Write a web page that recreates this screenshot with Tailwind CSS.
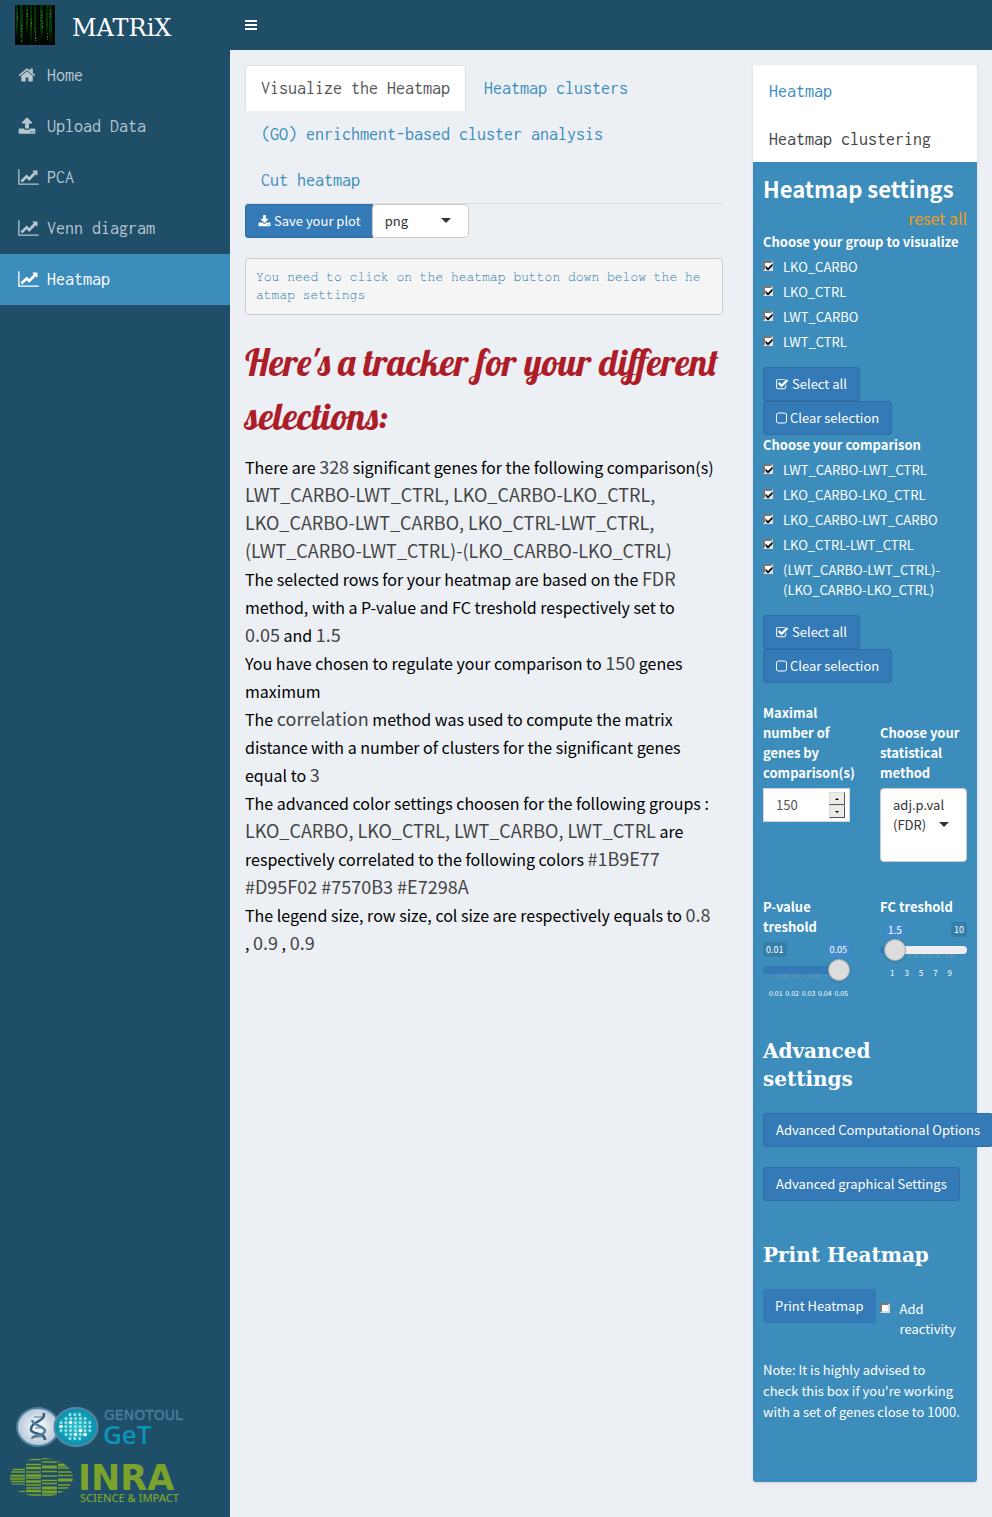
<!DOCTYPE html>
<html lang="en">
<head>
<meta charset="utf-8">
<title>MATRiX</title>
<script src="https://cdn.jsdelivr.net/npm/@tailwindcss/browser@4"></script>
</head>
<body class="flex min-h-screen bg-[#ecf0f5] font-['Source_Sans_Pro','Noto_Sans_CJK_SC',sans-serif] text-[13px] leading-5 text-[#333]">

<svg class="hidden" aria-hidden="true">
  <symbol id="i-home" viewBox="0 0 1792 1792"><path d="M1472 992v480q0 26-19 45t-45 19h-384v-384h-256v384h-384q-26 0-45-19t-19-45v-480q0-1 .5-3t.5-3l575-474 575 474q1 2 1 6zm223-69l-62 74q-8 9-21 11h-3q-13 0-21-7l-692-577-692 577q-12 8-24 7-13-2-21-11l-62-74q-8-10-7-23.5t11-21.5l719-599q32-26 76-26t76 26l244 204v-195q0-14 9-23t23-9h192q14 0 23 9t9 23v408l219 182q10 8 11 21.5t-7 23.5z"/></symbol>
  <symbol id="i-upload" viewBox="0 0 1792 1792"><path d="M1344 1472q0-26-19-45t-45-19-45 19-19 45 19 45 45 19 45-19 19-45zm256 0q0-26-19-45t-45-19-45 19-19 45 19 45 45 19 45-19 19-45zm128-224v320q0 40-28 68t-68 28h-1472q-40 0-68-28t-28-68v-320q0-40 28-68t68-28h427q21 56 70.5 92t110.5 36h256q61 0 110.5-36t70.5-92h427q40 0 68 28t28 68zm-325-648q-17 40-59 40h-256v448q0 26-19 45t-45 19h-256q-26 0-45-19t-19-45v-448h-256q-42 0-59-40-17-39 14-69l448-448q18-19 45-19t45 19l448 448q31 30 14 69z"/></symbol>
  <symbol id="i-download" viewBox="0 0 1792 1792"><path d="M1344 1344q0-26-19-45t-45-19-45 19-19 45 19 45 45 19 45-19 19-45zm256 0q0-26-19-45t-45-19-45 19-19 45 19 45 45 19 45-19 19-45zm128-224v320q0 40-28 68t-68 28h-1472q-40 0-68-28t-28-68v-320q0-40 28-68t68-28h465l135 136q58 56 136 56t136-56l136-136h464q40 0 68 28t28 68zm-325-569q17 41-14 70l-448 448q-18 19-45 19t-45-19l-448-448q-31-29-14-70 17-39 59-39h256v-448q0-26 19-45t45-19h256q26 0 45 19t19 45v448h256q42 0 59 39z"/></symbol>
  <symbol id="i-chart" viewBox="0 0 2048 1792"><path d="M2048 1536v128h-2048v-1536h128v1408h1920zm-128-1248v435q0 21-19.5 29.5t-35.5-7.5l-121-121-633 633q-10 10-23 10t-23-10l-233-233-416 416-192-192 585-585q10-10 23-10t23 10l233 233 464-464-121-121q-16-16-7.5-35.5t29.5-19.5h435q14 0 23 9t9 23z"/></symbol>
  <symbol id="i-check" viewBox="64 0 1792 1792"><path d="M1472 930v318q0 119-84.5 203.5t-203.5 84.5h-832q-119 0-203.5-84.5t-84.5-203.5v-832q0-119 84.5-203.5t203.5-84.5h832q63 0 117 25 15 7 18 23 3 17-9 29l-49 49q-10 10-23 10-3 0-9-2-23-6-45-6h-832q-66 0-113 47t-47 113v832q0 66 47 113t113 47h832q66 0 113-47t47-113v-254q0-13 9-22l64-64q10-10 23-10 6 0 12 3 20 8 20 29zm231-489l-814 814q-24 24-57 24t-57-24l-430-430q-24-24-24-57t24-57l110-110q24-24 57-24t57 24l263 263 647-647q24-24 57-24t57 24l110 110q24 24 24 57t-24 57z"/></symbol>
  <symbol id="i-square" viewBox="0 0 11 14"><rect x=".5" y="2" width="10" height="10" rx="2" fill="none" stroke="currentColor"/></symbol>
  <symbol id="i-tick" viewBox="0 0 10 10"><path d="M2.500 4.500L5 7L9.500 2.500V5L5 9.500L2.500 7Z"/></symbol>
</svg>

<aside class="flex w-[230px] shrink-0 flex-col bg-[#1f4e69]">
  <a href="#" class="flex h-[50px] items-center gap-[17px] pl-[15px] font-['DejaVu_Serif',serif] text-2xl font-light text-white">
    <svg class="size-10" viewBox="0 0 40 40" aria-hidden="true">
      <defs><linearGradient id="rain" x2="0" y2="1"><stop offset="0" stop-color="#062c06"/><stop offset=".6" stop-color="#083c08"/><stop offset="1" stop-color="#010601"/></linearGradient></defs>
      <rect width="40" height="40" fill="#020702"/>
      <g fill="url(#rain)"><rect x="1" width="2" height="34"/><rect x="5" width="3" height="38"/><rect x="11" width="2" height="30"/><rect x="15" width="2" height="40"/><rect x="19" width="2" height="35"/><rect x="25" width="3" height="36"/><rect x="31" width="2" height="32"/><rect x="34" width="3" height="39"/></g>
      <g stroke="#3c723c" stroke-dasharray="1 2 2 1"><path d="M2.500 8v8M6.500 20v18M12.500 5v7M16.500 14v8M20.500 23v13M26.500 6v10M27.500 18v6M32.500 28v9M35.500 5v9"/></g>
    </svg>
    <span class="pt-[6px]">MATRiX</span>
  </a>
  <nav class="flex flex-col font-['Inconsolata','Liberation_Mono',monospace] text-lg text-[#b8c7ce]">
    <a href="#" class="flex h-[51px] items-center gap-[9px] pb-[2px] pl-[18px]"><span class="w-5"><svg class="size-[18px] fill-current"><use href="#i-home"/></svg></span>Home</a>
    <a href="#" class="flex h-[51px] items-center gap-[9px] pb-[2px] pl-[18px]"><span class="w-5"><svg class="size-[18px] fill-current"><use href="#i-upload"/></svg></span>Upload Data</a>
    <a href="#" class="flex h-[51px] items-center gap-[9px] pb-[2px] pl-[18px]"><span class="w-5"><svg class="h-[18px] w-[21px] fill-current"><use href="#i-chart"/></svg></span>PCA</a>
    <a href="#" class="flex h-[51px] items-center gap-[9px] pb-[2px] pl-[18px]"><span class="w-5"><svg class="h-[18px] w-[21px] fill-current"><use href="#i-chart"/></svg></span>Venn diagram</a>
    <a href="#" aria-current="page" class="flex h-[51px] items-center gap-[9px] bg-[#3c8dbc] pb-[2px] pl-[18px] text-white"><span class="w-5"><svg class="h-[18px] w-[21px] fill-current"><use href="#i-chart"/></svg></span>Heatmap</a>
  </nav>
  <div class="mt-auto flex flex-col gap-[6px] pb-[13px] pl-[10px]">
    <svg class="h-[46px] w-[190px]" viewBox="0 0 190 46" role="img" aria-label="Genotoul GeT">
      <defs>
        <radialGradient id="pale"><stop offset="0" stop-color="#fff"/><stop offset="1" stop-color="#b5c6d8"/></radialGradient>
        <radialGradient id="teal"><stop offset="0" stop-color="#35c3cd"/><stop offset="1" stop-color="#078fae"/></radialGradient>
      </defs>
      <ellipse cx="28" cy="21" rx="21" ry="19" fill="url(#pale)" stroke="#4c7f9b" stroke-width="2"/>
      <g fill="none" stroke="#335f82" stroke-width="2.500"><path d="M34 7C35 17 21 14 21 24C22 29 35 26 35 34"/><path d="M22 14C23 20 35 20 35 25C34 31 22 28 22 33" stroke="#557d9c"/></g>
      <path d="M24 11h9M25 22h6M24 31h8" stroke="#527997" stroke-width="1"/>
      <ellipse cx="66" cy="21" rx="21.500" ry="19" fill="url(#teal)" stroke="#5687a1" stroke-width="2"/>
      <g fill="none" stroke="#9be5e9" stroke-width="3" stroke-linecap="round" stroke-dasharray="0 4.800"><path d="M60 8.500h13M56 12.500h22M51 16.500h31M51 20.500h31M51 24.500h31M56 28.500h22M60 32.500h13"/></g>
      <g fill="#fff"><circle cx="60.500" cy="16.500" r="1.800"/><circle cx="51" cy="20.500" r="1.800"/><circle cx="70.500" cy="24.500" r="1.800"/><circle cx="65.500" cy="28.500" r="1.800"/><circle cx="75" cy="28.500" r="1.800"/></g>
      <text x="94" y="14" fill="#4a7d98" stroke="#4a7d98" stroke-width=".4" font-family="DejaVu Sans" font-size="14">GENOTOUL</text>
      <text x="93" y="38" fill="#0895b8" font-family="Open Sans" font-weight="600" font-size="26">GeT</text>
    </svg>
    <svg class="h-[46px] w-[175px]" viewBox="0 0 175 46" role="img" aria-label="INRA Science &amp; Impact">
      <defs><clipPath id="globe"><ellipse cx="31.500" cy="19.500" rx="31.500" ry="19.500"/></clipPath></defs>
      <g clip-path="url(#globe)" stroke="#7ba32c">
        <path d="M0 11.500h15M0 14h15M0 17.500h15M0 21h15M0 23.500h15M0 33.500h15" stroke-width="1.500"/><path d="M0 19h15M0 26h15" stroke-width="1"/>
        <path d="M16 1.500h15M16 6.500h15M16 14h15M16 20h15M16 27h15M16 30h15M16 37h15" stroke-width="1.500"/><path d="M16 10h15M16 17.500h15M16 23.500h15M16 33h15" stroke-width="2.500"/>
        <path d="M32 .5h15M32 4h15M32 13.500h15M32 18h15M32 22.500h15M32 25.500h15M32 37h15" stroke-width="1.500"/><path d="M32 9h15M32 30h15M32 34h15" stroke-width="3"/>
        <path d="M48 3h15M48 10h15M48 14h15M48 17.500h15M48 27h15M48 30h15M48 34h15" stroke-width="1.500"/><path d="M48 7h15M48 22h15" stroke-width="3"/>
      </g>
      <g fill="#7ba32c"><text x="68" y="32" font-family="DejaVu Sans" font-weight="700" font-size="35">INRA</text>
      <text x="70" y="44" font-family="Noto Sans" font-weight="500" font-size="11">SCIENCE &amp; IMPACT</text></g>
    </svg>
  </div>
</aside>

<div class="flex min-w-0 flex-1 flex-col">
  <header class="flex h-[50px] items-center bg-[#1f4e69] pl-[15px]">
    <button aria-label="Toggle navigation" class="flex w-3 flex-col gap-[2px]"><span class="h-[2px] bg-white"></span><span class="h-[2px] bg-white"></span><span class="h-[2px] bg-white"></span></button>
  </header>

  <main class="flex items-start pt-[15px]">
    <section class="w-2/3 px-[15px]">
      <div role="tablist" class="flex flex-wrap gap-x-[2px] border-b border-[#ddd] font-['Inconsolata','Liberation_Mono',monospace] text-lg text-[#3c8dbc]">
        <a href="#" role="tab" aria-selected="true" class="flex h-[46px] items-center rounded-t border border-b-0 border-[#ddd] bg-white px-[15px] pb-px text-[#555]">Visualize the Heatmap</a>
        <a href="#" role="tab" class="flex h-[46px] items-center px-4">Heatmap clusters</a>
        <a href="#" role="tab" class="flex h-[46px] items-center px-4">(GO) enrichment-based cluster analysis</a>
        <a href="#" role="tab" class="flex h-[46px] items-center px-4">Cut heatmap</a>
      </div>
      <div class="flex">
        <button class="flex h-[34px] items-center gap-[3px] rounded-l-[3px] border border-[#2e6da4] bg-[#337ab7] pr-[11px] pl-3 text-white"><svg class="size-[13px] fill-current"><use href="#i-download"/></svg>Save your plot</button>
        <div class="relative -ml-px">
          <select aria-label="Plot format" class="h-[34px] w-[97px] appearance-none rounded border border-[#ccc] bg-white pl-3"><option>png</option></select>
          <span class="pointer-events-none absolute top-[14px] right-[18px] border-x-[5px] border-t-[5px] border-x-transparent border-t-[#333]"></span>
        </div>
      </div>
      <pre class="mt-5 overflow-hidden rounded border border-[#ccc] bg-[#f5f5f5] px-[10px] pt-[10px] pb-[9px] font-['Courier_10_Pitch','Nimbus_Mono_PS','FreeMono','Liberation_Mono',monospace] text-[13px] leading-[18px] text-[#2479ab]">You need to click on the heatmap button down below the he
atmap settings</pre>
      <h1 class="mt-5 mb-[10px] font-['Lobster','Liberation_Serif',serif] text-[37px] leading-[54px] font-normal whitespace-nowrap text-[#ad1d28]">Here's a tracker for your different<br>selections:</h1>
      <div class="text-base leading-7 whitespace-nowrap text-black [&_b]:text-[18px] [&_b]:leading-6 [&_b]:font-normal [&_b]:text-[#444]">
        <p>There are <b>328</b> significant genes for the following comparison(s)<br><b>LWT_CARBO-LWT_CTRL, LKO_CARBO-LKO_CTRL,<br>LKO_CARBO-LWT_CARBO, LKO_CTRL-LWT_CTRL,<br>(LWT_CARBO-LWT_CTRL)-(LKO_CARBO-LKO_CTRL)</b></p>
        <p>The selected rows for your heatmap are based on the <b>FDR</b><br>method, with a P-value and FC treshold respectively set to<br><b>0.05</b> and <b>1.5</b></p>
        <p>You have chosen to regulate your comparison to <b>150</b> genes<br>maximum</p>
        <p>The <b>correlation</b> method was used to compute the matrix<br>distance with a number of clusters for the significant genes<br>equal to <b>3</b></p>
        <p>The advanced color settings choosen for the following groups :<br><b>LKO_CARBO, LKO_CTRL, LWT_CARBO, LWT_CTRL</b> are<br>respectively correlated to the following colors <b>#1B9E77<br>#D95F02 #7570B3 #E7298A</b></p>
        <p>The legend size, row size, col size are respectively equals to <b>0.8</b><br>, <b>0.9</b> , <b>0.9</b></p>
      </div>
    </section>

    <aside class="w-1/3 px-[15px]">
      <div class="rounded-[3px] bg-white shadow-sm">
        <div role="tablist" class="flex flex-col pt-px font-['Inconsolata','Liberation_Mono',monospace] text-lg text-[#3c8dbc]">
          <a href="#" role="tab" class="flex h-12 items-center px-4 pt-[2px]">Heatmap</a>
          <a href="#" role="tab" aria-selected="true" class="flex h-12 items-center px-4 pt-[2px] text-[#444]">Heatmap clustering</a>
        </div>
        <form class="flex flex-col items-start rounded-b-[3px] bg-[#3c8dbc] px-[10px] pt-2 pb-[60px] text-white">
          <h2 class="text-[22px] leading-9 font-bold whitespace-nowrap">Heatmap settings</h2>
          <a href="#" class="mb-[2px] self-end text-base leading-6 text-[#f39c12]">reset all</a>
          <fieldset class="flex flex-col gap-[5px]">
            <legend class="mb-[5px] font-bold whitespace-nowrap">Choose your group to visualize</legend>
            <label class="flex gap-[10px]"><span class="relative mt-1 size-[10px] shrink-0"><input type="checkbox" checked class="block size-[10px] appearance-none border-2 border-t-[#777] border-r-[#ddd] border-b-[#ddd] border-l-[#777] bg-white"><svg class="pointer-events-none absolute inset-0 size-[10px] fill-black"><use href="#i-tick"/></svg></span>LKO_CARBO</label>
            <label class="flex gap-[10px]"><span class="relative mt-1 size-[10px] shrink-0"><input type="checkbox" checked class="block size-[10px] appearance-none border-2 border-t-[#777] border-r-[#ddd] border-b-[#ddd] border-l-[#777] bg-white"><svg class="pointer-events-none absolute inset-0 size-[10px] fill-black"><use href="#i-tick"/></svg></span>LKO_CTRL</label>
            <label class="flex gap-[10px]"><span class="relative mt-1 size-[10px] shrink-0"><input type="checkbox" checked class="block size-[10px] appearance-none border-2 border-t-[#777] border-r-[#ddd] border-b-[#ddd] border-l-[#777] bg-white"><svg class="pointer-events-none absolute inset-0 size-[10px] fill-black"><use href="#i-tick"/></svg></span>LWT_CARBO</label>
            <label class="flex gap-[10px]"><span class="relative mt-1 size-[10px] shrink-0"><input type="checkbox" checked class="block size-[10px] appearance-none border-2 border-t-[#777] border-r-[#ddd] border-b-[#ddd] border-l-[#777] bg-white"><svg class="pointer-events-none absolute inset-0 size-[10px] fill-black"><use href="#i-tick"/></svg></span>LWT_CTRL</label>
          </fieldset>
          <button type="button" class="mt-[15px] flex h-[34px] items-center gap-[3px] rounded-[3px] border border-[#2e6da4] bg-[#337ab7] px-3"><svg class="size-[13px] fill-current"><use href="#i-check"/></svg>Select all</button>
          <button type="button" class="flex h-[34px] items-center gap-[3px] rounded-[3px] border border-[#2e6da4] bg-[#337ab7] px-3"><svg class="h-[14px] w-[11px]"><use href="#i-square"/></svg>Clear selection</button>
          <fieldset class="flex flex-col gap-[5px]">
            <legend class="mb-[5px] font-bold whitespace-nowrap">Choose your comparison</legend>
            <label class="flex gap-[10px]"><span class="relative mt-1 size-[10px] shrink-0"><input type="checkbox" checked class="block size-[10px] appearance-none border-2 border-t-[#777] border-r-[#ddd] border-b-[#ddd] border-l-[#777] bg-white"><svg class="pointer-events-none absolute inset-0 size-[10px] fill-black"><use href="#i-tick"/></svg></span>LWT_CARBO-LWT_CTRL</label>
            <label class="flex gap-[10px]"><span class="relative mt-1 size-[10px] shrink-0"><input type="checkbox" checked class="block size-[10px] appearance-none border-2 border-t-[#777] border-r-[#ddd] border-b-[#ddd] border-l-[#777] bg-white"><svg class="pointer-events-none absolute inset-0 size-[10px] fill-black"><use href="#i-tick"/></svg></span>LKO_CARBO-LKO_CTRL</label>
            <label class="flex gap-[10px]"><span class="relative mt-1 size-[10px] shrink-0"><input type="checkbox" checked class="block size-[10px] appearance-none border-2 border-t-[#777] border-r-[#ddd] border-b-[#ddd] border-l-[#777] bg-white"><svg class="pointer-events-none absolute inset-0 size-[10px] fill-black"><use href="#i-tick"/></svg></span>LKO_CARBO-LWT_CARBO</label>
            <label class="flex gap-[10px]"><span class="relative mt-1 size-[10px] shrink-0"><input type="checkbox" checked class="block size-[10px] appearance-none border-2 border-t-[#777] border-r-[#ddd] border-b-[#ddd] border-l-[#777] bg-white"><svg class="pointer-events-none absolute inset-0 size-[10px] fill-black"><use href="#i-tick"/></svg></span>LKO_CTRL-LWT_CTRL</label>
            <label class="flex gap-[10px]"><span class="relative mt-1 size-[10px] shrink-0"><input type="checkbox" checked class="block size-[10px] appearance-none border-2 border-t-[#777] border-r-[#ddd] border-b-[#ddd] border-l-[#777] bg-white"><svg class="pointer-events-none absolute inset-0 size-[10px] fill-black"><use href="#i-tick"/></svg></span><span>(LWT_CARBO-LWT_CTRL)-<br>(LKO_CARBO-LKO_CTRL)</span></label>
          </fieldset>
          <button type="button" class="mt-[15px] flex h-[34px] items-center gap-[3px] rounded-[3px] border border-[#2e6da4] bg-[#337ab7] px-3"><svg class="size-[13px] fill-current"><use href="#i-check"/></svg>Select all</button>
          <button type="button" class="flex h-[34px] items-center gap-[3px] rounded-[3px] border border-[#2e6da4] bg-[#337ab7] px-3"><svg class="h-[14px] w-[11px]"><use href="#i-square"/></svg>Clear selection</button>

          <div class="mt-5 grid w-full grid-cols-2 gap-x-[30px]">
            <label for="maxgenes" class="self-end font-bold">Maximal number of genes by comparison(s)</label>
            <label for="method" class="self-end font-bold">Choose your statistical method</label>
            <div class="mt-[5px] flex h-[34px] items-center border border-[#d2d6de] bg-white pr-1 text-[#555]">
              <input id="maxgenes" type="number" value="150" class="w-full min-w-0 flex-1 [appearance:textfield] pl-3 outline-none [&::-webkit-inner-spin-button]:appearance-none">
              <span class="flex w-4 flex-col">
                <button type="button" aria-label="Increase" class="flex h-[13px] items-center justify-center border border-t-[#ddd] border-r-[#555] border-b-[#555] border-l-[#ddd] bg-[#eeebe7]"><span class="border-x-2 border-b-2 border-x-transparent border-b-black"></span></button>
                <button type="button" aria-label="Decrease" class="flex h-[13px] items-center justify-center border border-t-[#ddd] border-r-[#555] border-b-[#555] border-l-[#ddd] bg-[#eeebe7]"><span class="border-x-2 border-t-2 border-x-transparent border-t-black"></span></button>
              </span>
            </div>
            <div class="relative mt-[5px] h-[74px] rounded border border-[#ccc] bg-white px-3 py-[6px] text-[#333]">
              adj.p.val<br>(FDR)
              <span class="absolute top-[33px] right-[17px] border-x-[5px] border-t-[5px] border-x-transparent border-t-[#333]"></span>
              <select id="method" class="absolute inset-0 size-full opacity-0"><option>adj.p.val (FDR)</option></select>
            </div>
          </div>

          <div class="mt-[35px] grid w-full grid-cols-2 items-start gap-x-[30px]">
            <div>
              <label for="pval" class="block font-bold">P-value treshold</label>
              <div class="mt-[5px] flex h-[15px] items-center justify-between text-[9px] leading-[15px]"><span class="rounded-[3px] bg-black/10 px-[3px]">0.01</span><output for="pval" class="rounded-[3px] bg-[#428bca] px-[3px]">0.05</output></div>
              <div class="relative mt-[2px] h-[22px]">
                <input id="pval" type="range" min="0.01" max="0.05" step="0.01" value="0.05" class="block h-[22px] w-full appearance-none bg-transparent [&::-webkit-slider-runnable-track]:h-2 [&::-webkit-slider-runnable-track]:rounded-full [&::-webkit-slider-runnable-track]:bg-[#337ab7] [&::-webkit-slider-thumb]:-mt-[7px] [&::-webkit-slider-thumb]:size-[22px] [&::-webkit-slider-thumb]:appearance-none [&::-webkit-slider-thumb]:rounded-full [&::-webkit-slider-thumb]:border [&::-webkit-slider-thumb]:border-[#aaa] [&::-webkit-slider-thumb]:bg-[#ddd] [&::-webkit-slider-thumb]:shadow">
                <svg class="pointer-events-none absolute top-[15px] left-0 h-1 w-16" viewBox="0 0 64 4" aria-hidden="true"><path d="M14.500 0v4M17.500 0v4M21.500 0v4M24.500 0v4M30.500 0v4M33.500 0v4M36.500 0v4M40.500 0v4M47.500 0v4M50.500 0v4M53.500 0v4M56.500 0v4M63.500 0v4" stroke="#7d99ad" stroke-width=".7"/></svg>
              </div>
              <div class="mt-[6px] flex justify-between pr-[2px] pl-[6px] text-[7px] leading-3"><span>0.01</span><span>0.02</span><span>0.03</span><span>0.04</span><span>0.05</span></div>
            </div>
            <div>
              <label for="fc" class="block font-bold">FC treshold</label>
              <div class="mt-[5px] flex h-[15px] items-center justify-between pl-[5px] text-[9px] leading-[15px]"><output for="fc" class="rounded-[3px] bg-[#428bca] px-[3px] text-[10px]">1.5</output><span class="rounded-[3px] bg-black/10 px-[3px]">10</span></div>
              <div class="relative mt-[2px] h-[22px]">
                <input id="fc" type="range" min="1" max="10" step="0.5" value="1.5" class="block h-[22px] w-full appearance-none bg-transparent [&::-webkit-slider-runnable-track]:h-2 [&::-webkit-slider-runnable-track]:rounded-full [&::-webkit-slider-runnable-track]:bg-[linear-gradient(90deg,#337ab7_15px,#eee_15px)] [&::-webkit-slider-thumb]:-mt-[7px] [&::-webkit-slider-thumb]:size-[22px] [&::-webkit-slider-thumb]:appearance-none [&::-webkit-slider-thumb]:rounded-full [&::-webkit-slider-thumb]:border [&::-webkit-slider-thumb]:border-[#aaa] [&::-webkit-slider-thumb]:bg-[#ddd] [&::-webkit-slider-thumb]:shadow">
                <svg class="pointer-events-none absolute top-[15px] left-0 h-1 w-20" viewBox="0 0 80 4" aria-hidden="true"><path d="M28.500 0v4M30.500 0v4M35.500 0v4M37.500 0v4M42.500 0v4M45.500 0v4M49.500 0v4M52.500 0v4M57.500 0v4M59.500 0v4M66.500 0v4M68.500 0v4M71.500 0v4M73.500 0v4" stroke="#7d99ad" stroke-width=".7"/></svg>
              </div>
              <div class="mt-[6px] flex justify-between pr-[15px] pl-[10px] text-[8px] leading-3"><span>1</span><span>3</span><span>5</span><span>7</span><span>9</span></div>
            </div>
          </div>

          <h3 class="mt-[38px] font-['DejaVu_Serif',serif] text-xl leading-7 font-bold">Advanced settings</h3>
          <button type="button" class="mt-5 h-[34px] rounded-[3px] border border-[#2e6da4] bg-[#337ab7] px-3 whitespace-nowrap">Advanced Computational Options</button>
          <button type="button" class="mt-5 h-[34px] rounded-[3px] border border-[#2e6da4] bg-[#337ab7] px-3 whitespace-nowrap">Advanced graphical Settings</button>
          <h3 class="mt-10 font-['DejaVu_Serif',serif] text-xl leading-7 font-bold whitespace-nowrap">Print Heatmap</h3>
          <div class="mt-5 flex items-start gap-1">
            <button type="button" class="h-[34px] rounded-[3px] bg-[#337ab7] px-3 whitespace-nowrap">Print Heatmap</button>
            <label class="flex gap-[10px] pt-[10px]"><input type="checkbox" class="mt-1 size-[10px] shrink-0 appearance-none border-2 border-t-[#777] border-r-[#ddd] border-b-[#ddd] border-l-[#777] bg-white"><span>Add reactivity</span></label>
          </div>
          <p class="mt-5 leading-[21px] whitespace-nowrap">Note: It is highly advised to<br>check this box if you're working<br>with a set of genes close to 1000.</p>
        </form>
      </div>
    </aside>
  </main>
</div>
</body>
</html>
